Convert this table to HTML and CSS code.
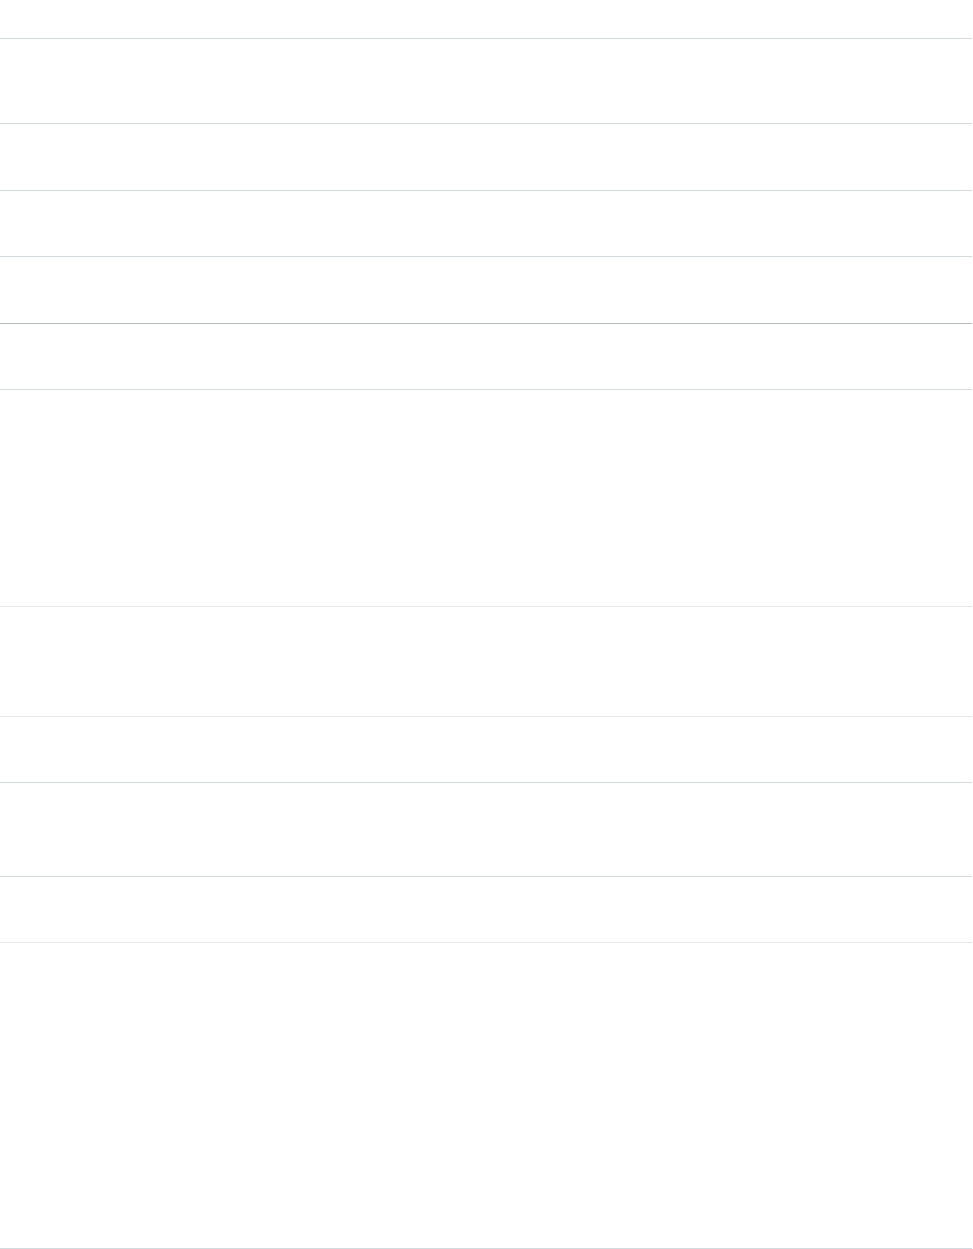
FILE: index.html
```html
<!DOCTYPE html>
<html lang="en">
<head>
    <meta charset="UTF-8">
    <meta name="viewport" content="width=device-width, initial-scale=1.0">
    <title>List</title>
    <link rel="stylesheet" href="styles.css">
</head>
<body>
    <div class="list">
        <div class="row row-head"></div>
        <div class="row row-tall"></div>
        <div class="row"></div>
        <div class="row row-short"></div>
        <div class="row row-dark"></div>
        <div class="row row-short"></div>
        <div class="row row-block row-light"></div>
        <div class="row row-mid row-light"></div>
        <div class="row row-short"></div>
        <div class="row row-wide"></div>
        <div class="row row-short row-light"></div>
        <div class="row row-last"></div>
    </div>
</body>
</html>
```

FILE: styles.css
```css
body {
    background-color: #fff;
    color: #16325c;
    font-family: Arial, "Liberation Sans", sans-serif;
    margin: 0;
    padding: 0;
}
.list {
    width: 972px;
}
.row {
    height: 66px;
    border-bottom: 1px solid #d3dbdf;
}
.row-head {
    height: 38px;
}
.row-tall {
    height: 84px;
}
.row-short {
    height: 65px;
}
.row-dark {
    border-bottom-color: #b3bbc0;
}
.row-light {
    border-bottom-color: #e2e7ea;
}
.row-block {
    height: 216px;
}
.row-mid {
    height: 109px;
}
.row-wide {
    height: 93px;
}
.row-last {
    height: 305px;
}
```
